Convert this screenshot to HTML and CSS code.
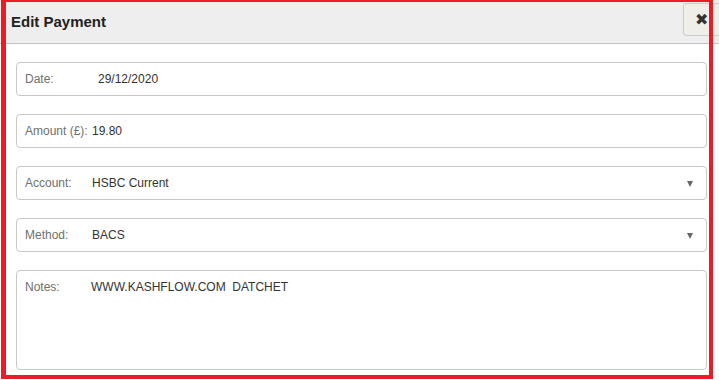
FILE: index.html
```html
<!DOCTYPE html>
<html lang="en">
<head>
    <meta charset="UTF-8">
    <title>Edit Payment</title>
    <link rel="stylesheet" href="styles.css">
</head>
<body>
    <div class="dialog">
        <div class="dialog-header">
            <h1 class="dialog-title">Edit Payment</h1>
            <button class="close-btn">&#10006;</button>
        </div>

        <div class="dialog-body">
            <div class="field">
                <span class="field-label">Date:</span>
                <span class="field-value date-value">29/12/2020</span>
            </div>
            <div class="field">
                <span class="field-label">Amount (£):</span>
                <span class="field-value">19.80</span>
            </div>
            <div class="field">
                <span class="field-label">Account:</span>
                <span class="field-value">HSBC Current</span>
                <span class="select-arrow"></span>
            </div>
            <div class="field">
                <span class="field-label">Method:</span>
                <span class="field-value">BACS</span>
                <span class="select-arrow"></span>
            </div>
            <div class="field notes">
                <span class="field-label">Notes:</span>
                <span class="field-value">WWW.KASHFLOW.COM&nbsp; DATCHET</span>
            </div>
        </div>
    </div>

    <div class="highlight"></div>
</body>
</html>
```

FILE: styles.css
```css
body {
    margin: 0;
    background: #fff;
    font-family: 'Liberation Sans', Arial, sans-serif;
    overflow: hidden;
}

.dialog {
    width: 719px;
    height: 380px;
}

.dialog-header {
    display: flex;
    align-items: center;
    height: 43px;
    background: #eeeeee;
    border-bottom: 1px solid #c2c2c2;
}

.dialog-title {
    margin: 0 0 0 11px;
    font-size: 15px;
    font-weight: bold;
    color: #222;
    flex: 1;
}

.close-btn {
    width: 40px;
    height: 33px;
    margin-top: -4px;
    margin-right: -4px;
    padding: 0 0 0 11px;
    background: #efeee8;
    border: 1px solid #cccccc;
    border-radius: 3px;
    color: #333;
    font-size: 16px;
    font-weight: bold;
    font-family: 'DejaVu Sans', sans-serif;
    text-align: left;
}

.dialog-body {
    display: flex;
    flex-direction: column;
    gap: 18px;
    padding: 18px 12px 0 16px;
}

.field {
    display: flex;
    align-items: center;
    height: 34px;
    box-sizing: border-box;
    padding-left: 8px;
    border: 1px solid #c8c8c8;
    border-radius: 4px;
    font-size: 12px;
}

.field-label {
    width: 67px;
    color: #6f6f6f;
}

.field-value {
    color: #333;
}

.date-value {
    padding-left: 6px;
}

.select-arrow {
    margin-left: auto;
    margin-right: 13px;
    margin-top: 2px;
    border-left: 3.5px solid transparent;
    border-right: 3.5px solid transparent;
    border-top: 6px solid #666;
}

.notes {
    height: 100px;
    align-items: flex-start;
    padding-top: 9px;
}

.notes .field-label {
    width: 66px;
}

.highlight {
    position: fixed;
    left: 1px;
    top: 0;
    width: 703px;
    height: 373px;
    border-top: 2px solid #ed1c24;
    border-left: 5px solid #ed1c24;
    border-right: 4px solid #ed1c24;
    border-bottom: 4px solid #ed1c24;
    pointer-events: none;
}
```
